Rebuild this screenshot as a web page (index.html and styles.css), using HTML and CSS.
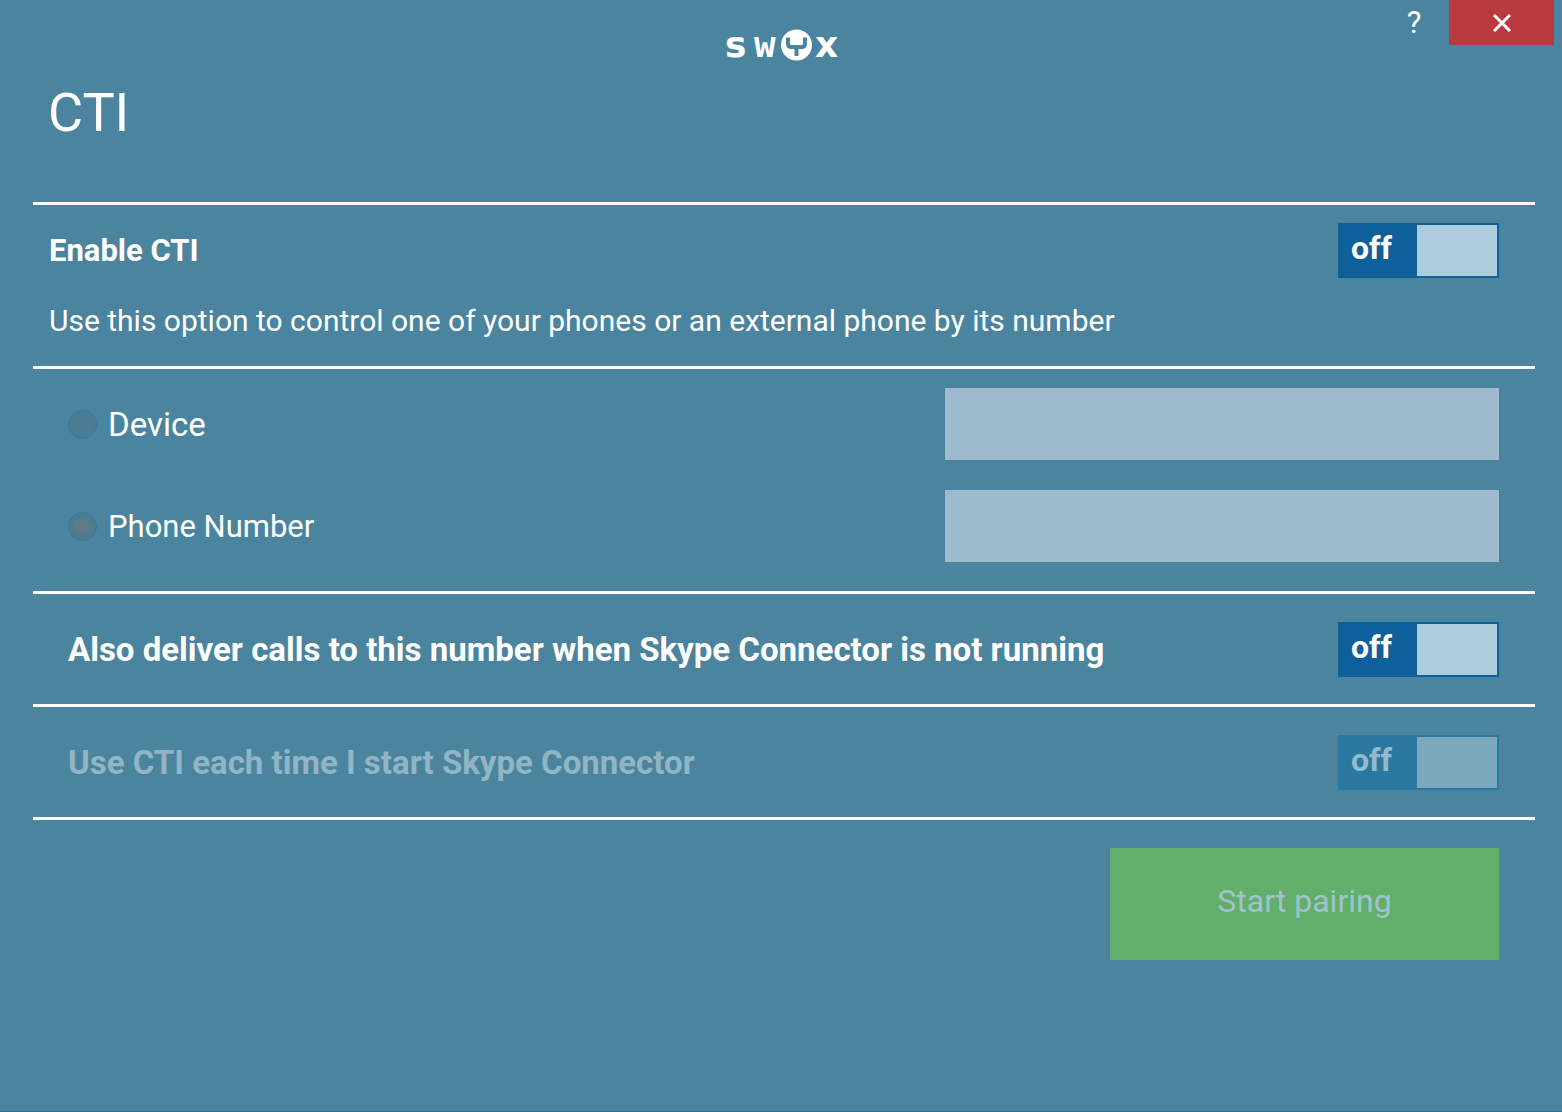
FILE: index.html
```html
<!DOCTYPE html>
<html lang="en">
<head>
  <meta charset="UTF-8" />
  <meta name="viewport" content="width=device-width, initial-scale=1.0"/>
  <title>Swyx Skype Connector - CTI</title>
  <link rel="stylesheet" href="styles.css">
</head>
<body>
  <header class="titlebar">
    <svg class="logo" viewBox="-2 0 114 31" role="img" aria-label="swyx">
      <g class="logo-text">
        <text x="-1" y="27">s</text>
        <text x="28" y="27" class="logo-w">w</text>
        <text x="89" y="27">x</text>
      </g>
      <circle cx="70.5" cy="15" r="15.5" fill="#fff"/>
      <path class="logo-fork" d="M62 7.500v6q0 3.500 3.500 3.500h10q3.500 0 3.500-3.500v-6M70.500 17v9"/>
    </svg>
    <div class="window-buttons">
      <button type="button" class="help-btn" aria-label="Help">?</button>
      <button type="button" class="close-btn" aria-label="Close">
        <svg width="18" height="18" viewBox="0 0 18 18"><path d="M1 1l16 16M17 1L1 17"/></svg>
      </button>
    </div>
  </header>

  <main>
    <h1>CTI</h1>

    <section class="enable">
      <div class="row">
        <label class="option-title" for="enableCti">Enable CTI</label>
        <label class="toggle">off<input type="checkbox" id="enableCti"></label>
      </div>
      <p>Use this option to control one of your phones or an external phone by its number</p>
    </section>

    <section class="targets">
      <div class="row">
        <label class="radio device"><input type="radio" name="target" disabled>Device</label>
        <select class="field" aria-label="Device" disabled></select>
      </div>
      <div class="row">
        <label class="radio"><input type="radio" name="target" checked disabled>Phone Number</label>
        <input type="text" class="field" aria-label="Phone Number" disabled>
      </div>
    </section>

    <section class="option">
      <div class="row">
        <label class="option-title" for="deliverCalls">Also deliver calls to this number when Skype Connector is not running</label>
        <label class="toggle">off<input type="checkbox" id="deliverCalls"></label>
      </div>
    </section>

    <section class="option disabled">
      <div class="row">
        <label class="option-title" for="autoCti">Use CTI each time I start Skype Connector</label>
        <label class="toggle">off<input type="checkbox" id="autoCti" disabled></label>
      </div>
    </section>

    <div class="actions">
      <button type="button" class="pair-btn" disabled>Start pairing</button>
    </div>
  </main>
</body>
</html>
```
FILE: styles.css
```css
* {
  box-sizing: border-box;
}

body {
  margin: 0;
  min-height: 100vh;
  background-color: #4a849e;
  border-bottom: 1px solid #2a6f94;
  color: #fff;
  font-family: Roboto, sans-serif;
  font-size: 31px;
}

button, input, select {
  font: inherit;
}

.titlebar {
  display: grid;
  grid-template-columns: 1fr auto 1fr;
  align-items: start;
  padding: 0 8px;
}

.logo {
  grid-column: 2;
  width: 114px;
  height: 31px;
  margin-top: 30px;
  overflow: visible;
}

.logo-text {
  fill: #fff;
  font-family: "DejaVu Sans", sans-serif;
  font-size: 36px;
  font-weight: bold;
}

.logo-w {
  font-family: "DejaVu Sans Mono", monospace;
}

.logo-fork {
  fill: none;
  stroke: #4a849e;
  stroke-width: 4;
}

.window-buttons {
  display: flex;
  justify-content: flex-end;
}

.window-buttons button {
  height: 45px;
  border: none;
  color: #fff;
  cursor: pointer;
}

.help-btn {
  width: 70px;
  padding: 0;
  background: none;
}

.close-btn {
  display: flex;
  align-items: center;
  justify-content: center;
  width: 105px;
  background-color: #b93a3e;
}

.close-btn path {
  stroke: #fff;
  stroke-width: 3;
}

main {
  padding: 0 27px 0 33px;
}

h1 {
  margin: 0;
  padding: 20px 15px 57px;
  font-size: 54px;
  font-weight: normal;
  line-height: 64px;
}

section {
  border-top: 3px solid #fff;
}

.row {
  display: flex;
  align-items: center;
  justify-content: space-between;
}

.enable {
  padding: 18px 36px 26px 16px;
}

.enable p {
  margin: 24px 0 0;
  font-size: 30px;
  line-height: 38px;
}

.option-title {
  font-weight: bold;
}

.toggle {
  display: flex;
  align-items: flex-start;
  justify-content: space-between;
  flex: none;
  width: 161px;
  height: 55px;
  padding: 2px 2px 2px 13px;
  background-color: #0e609a;
  font-size: 32px;
  font-weight: bold;
  line-height: 46px;
}

.toggle input {
  appearance: none;
  width: 80px;
  height: 51px;
  margin: 0;
  background-color: #adcddd;
}

.targets {
  display: flex;
  flex-direction: column;
  gap: 30px;
  padding: 19px 36px 29px 35px;
}

.radio {
  display: flex;
  align-items: center;
  gap: 11px;
}

.device {
  font-size: 33px;
}

.radio input {
  appearance: none;
  width: 29px;
  height: 29px;
  margin: 0;
  border: 1px solid #34799f;
  border-radius: 50%;
  background-color: #4a7d94;
  background-clip: padding-box;
}

.radio input:checked {
  background-image: radial-gradient(circle, #5e7a86 8px, transparent 9px);
}

.field {
  appearance: none;
  width: 554px;
  max-width: 50%;
  height: 72px;
  padding: 0 16px;
  border: none;
  border-radius: 0;
  background-color: #9ebbcd;
  color: #fff;
  opacity: 1;
}

.option {
  padding: 28px 36px 27px 35px;
}

.option .option-title {
  font-size: 33px;
}

.disabled .option-title {
  color: #92b5c5;
}

.disabled .toggle {
  background-color: #2b78a1;
  color: #92bbcf;
}

.disabled .toggle input {
  background-color: #7ba8bb;
}

.actions {
  display: flex;
  justify-content: flex-end;
  padding: 28px 36px 0 0;
  border-top: 3px solid #fff;
}

.pair-btn {
  width: 389px;
  height: 112px;
  padding-bottom: 8px;
  border: none;
  background-color: #62ae6b;
  color: #a1c3cb;
  font-size: 32px;
}
```
